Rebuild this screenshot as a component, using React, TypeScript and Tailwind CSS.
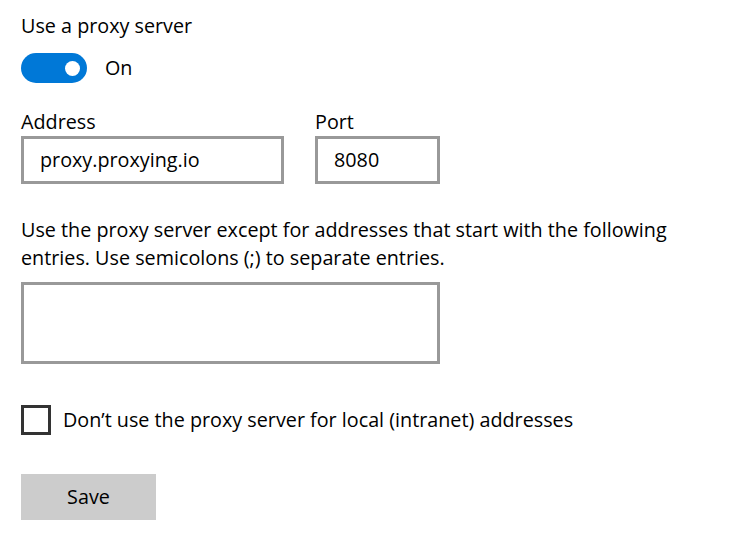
import React from "react";

export default function App() {
  return (
    <div
      className="w-[735px] h-[540px] bg-white text-[#000] overflow-hidden pl-[21px]"
      style={{ fontFamily: '"Open Sans", "Noto Sans", sans-serif' }}
    >
      <div className="pt-[12px] text-[19.75px] leading-[28px]">Use a proxy server</div>
      <div className="mt-[13px] flex items-center">
        <div className="w-[66px] h-[30px] rounded-full bg-[#0078d7] flex items-center justify-end pr-[7px]">
          <div className="w-[15px] h-[15px] rounded-full bg-white" />
        </div>
        <span className="ml-[18px] text-[19.75px] leading-[28px]">On</span>
      </div>
      <div className="mt-[27px] flex gap-[31px]">
        <div className="flex flex-col">
          <span className="text-[19.75px] leading-[24px]">Address</span>
          <div className="mt-[2px] w-[263px] h-[48px] border-[3px] border-[#999] flex items-center pl-[16px] text-[19.75px]">
            proxy.proxying.io
          </div>
        </div>
        <div className="flex flex-col">
          <span className="text-[19.75px] leading-[24px]">Port</span>
          <div className="mt-[2px] w-[125px] h-[48px] border-[3px] border-[#999] flex items-center pl-[16px] text-[19.75px]">
            8080
          </div>
        </div>
      </div>
      <div className="mt-[32px] text-[19.75px] leading-[28px] whitespace-nowrap">
        Use the proxy server except for addresses that start with the following
        <br />
        entries. Use semicolons (;) to separate entries.
      </div>
      <div className="mt-[10px] w-[419px] h-[82px] border-[3px] border-[#999]" />
      <div className="mt-[41px] flex items-center">
        <div className="w-[30px] h-[30px] border-[3px] border-[#333]" />
        <span className="ml-[12px] text-[19.75px] leading-[28px]">
          Don’t use the proxy server for local (intranet) addresses
        </span>
      </div>
      <div className="mt-[39px] w-[135px] h-[46px] bg-[#cccccc] flex items-center justify-center text-[19.75px]">
        Save
      </div>
    </div>
  );
}
